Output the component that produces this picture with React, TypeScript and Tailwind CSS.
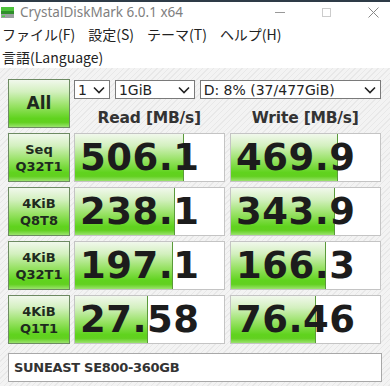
import React from "react";

const rows = [
  { a: "Seq", b: "Q32T1", read: "506.1", rp: 73, write: "469.9", wp: 72 },
  { a: "4KiB", b: "Q8T8", read: "238.1", rp: 67, write: "343.9", wp: 70 },
  { a: "4KiB", b: "Q32T1", read: "197.1", rp: 65.5, write: "166.3", wp: 64 },
  { a: "4KiB", b: "Q1T1", read: "27.58", rp: 49, write: "76.46", wp: 57 },
];

const green =
  "bg-[linear-gradient(to_bottom,#f1f8ec_0%,#d3f0bf_25%,#98e265_55%,#60d31e_82%,#62d020_90%,#9be36e_100%)]";

function Chevron() {
  return (
    <svg width="12" height="8" viewBox="0 0 12 8" className="shrink-0">
      <path d="M1 1.5 L6 6.5 L11 1.5" fill="none" stroke="#222" strokeWidth="1.6" />
    </svg>
  );
}

function Select({ label, w }: { label: string; w: string }) {
  return (
    <div className={`${w} h-[19px] border border-[#7a7a7a] bg-white flex items-center justify-between pl-[3px] pr-[4px] text-[14px] leading-none text-[#222]`}>
      <span>{label}</span>
      <Chevron />
    </div>
  );
}

function Bar({ value, pct }: { value: string; pct: number }) {
  return (
    <div className="relative w-full h-full border border-[#c4c4c4] bg-white overflow-hidden">
      <div className={`absolute left-0 top-0 bottom-0 ${green} border-r border-[#5a9a3a]`} style={{ width: `${pct}%` }} />
      <div className="relative h-full flex items-center pl-[5px] text-[37px] font-bold leading-none text-[#1c1c1c] tracking-[0.5px]">
        {value}
      </div>
    </div>
  );
}

export default function App() {
  return (
    <div
      className="w-[390px] h-[386px] overflow-hidden bg-white flex flex-col"
      style={{ fontFamily: '"DejaVu Sans", "Noto Sans CJK JP", sans-serif' }}
    >
      <div className="h-[23px] border-t-2 border-[#2e3b47] flex items-center shrink-0">
        <svg width="14" height="13" viewBox="0 0 14 13" className="ml-[1px]">
          <rect x="0" y="1" width="13" height="4" fill="#4cc23a" />
          <rect x="0" y="5" width="13" height="3" fill="#2f8f2a" />
          <rect x="0" y="8" width="13" height="4" fill="#9aa0a0" />
          <rect x="1" y="9.5" width="3" height="1.5" fill="#4ad040" />
        </svg>
        <span className="ml-[5px] text-[13.5px] text-[#808080]" style={{ fontFamily: '"Noto Sans", sans-serif' }}>
          CrystalDiskMark 6.0.1 x64
        </span>
        <div className="ml-auto flex items-center">
          <div className="w-[10px] h-[1px] bg-[#999] mr-[37px]" />
          <div className="w-[9px] h-[9px] border border-[#ccc] mr-[37px]" />
          <svg width="11" height="11" viewBox="0 0 11 11" className="mr-[11px]">
            <path d="M0.5 0.5 L10.5 10.5 M10.5 0.5 L0.5 10.5" stroke="#888" strokeWidth="1" />
          </svg>
        </div>
      </div>
      <div
        className="h-[23px] flex items-center pl-[2px] gap-[13px] text-[14px] text-[#222] shrink-0"
        style={{ fontFamily: '"Noto Sans CJK JP", sans-serif' }}
      >
        <span>ファイル(F)</span>
        <span>設定(S)</span>
        <span>テーマ(T)</span>
        <span>ヘルプ(H)</span>
      </div>
      <div
        className="h-[22px] flex items-center pl-[2px] text-[14px] text-[#222] shrink-0"
        style={{ fontFamily: '"Noto Sans CJK JP", sans-serif' }}
      >
        言語(Language)
      </div>
      <div className="flex-1 pt-[11px] px-[8px] bg-[repeating-linear-gradient(135deg,#f3f3f3_0px,#f3f3f3_3px,#e8e8e8_3px,#e8e8e8_4px)]">
        <div className="grid grid-cols-[62px_151px_152px] gap-x-[4px] gap-y-[5px] grid-rows-[49px_49px_49px_49px_49px]">
          <div className={`${green} border border-[#6d8a62] flex items-center justify-center text-[17px] font-bold text-[#1e2a1e]`}>
            All
          </div>
          <div className="col-span-2 flex flex-col">
            <div className="flex gap-[5px] mt-[1px]">
              <Select label="1" w="w-[36px]" />
              <Select label="1GiB" w="w-[80px]" />
              <Select label="D: 8% (37/477GiB)" w="w-[182px]" />
            </div>
            <div className="flex flex-1 items-center pt-[8px] text-[15.5px] font-bold text-[#333] tracking-[-0.2px]">
              <div className="w-[151px] text-center">Read [MB/s]</div>
              <div className="w-[152px] ml-[5px] text-center">Write [MB/s]</div>
            </div>
          </div>
          {rows.map((r, i) => (
            <React.Fragment key={i}>
              <div className={`${green} border border-[#6d8a62] flex flex-col items-center justify-center text-[13px] font-bold leading-[17px] text-[#1e2a1e]`}>
                <span>{r.a}</span>
                <span>{r.b}</span>
              </div>
              <Bar value={r.read} pct={r.rp} />
              <div className="pl-[1px]">
                <Bar value={r.write} pct={r.wp} />
              </div>
            </React.Fragment>
          ))}
        </div>
        <div className="mt-[9px] h-[29px] border border-[#a8a8a8] bg-white flex items-center pl-[5px] text-[13px] font-bold text-[#333] tracking-[-0.3px]">
          SUNEAST SE800-360GB
        </div>
      </div>
    </div>
  );
}
